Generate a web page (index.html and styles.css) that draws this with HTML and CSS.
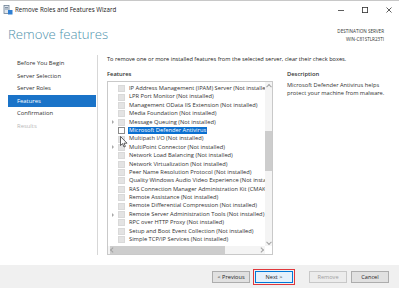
FILE: index.html
```html
<!DOCTYPE html>
<html>
<head>
<meta charset="utf-8">
<link rel="stylesheet" href="styles.css">
</head>
<body>
<div class="window">
  <div class="titlebar">
    <svg class="appicon" width="10" height="10" viewBox="0 0 10 10">
      <rect x="1" y="0.5" width="5" height="8" fill="#dfe6ee" stroke="#6d7f93" stroke-width="0.8"/>
      <rect x="2" y="2" width="3" height="0.8" fill="#6d7f93"/>
      <rect x="2" y="3.6" width="3" height="0.8" fill="#6d7f93"/>
      <rect x="5" y="5" width="4.5" height="4.5" fill="#2f7fd3"/>
    </svg>
    <span class="title">Remove Roles and Features Wizard</span>
    <div class="controls">
      <svg width="10" height="10" viewBox="0 0 10 10"><line x1="2" y1="5.5" x2="8" y2="5.5" stroke="#333" stroke-width="0.8"/></svg>
      <svg width="10" height="10" viewBox="0 0 10 10"><rect x="2.4" y="2.4" width="5.2" height="5.2" fill="none" stroke="#333" stroke-width="0.8"/></svg>
      <svg width="10" height="10" viewBox="0 0 10 10"><path d="M2.5 2.5L7.5 7.5M7.5 2.5L2.5 7.5" stroke="#333" stroke-width="0.8"/></svg>
    </div>
  </div>
  <div class="header">
    <h1 class="heading">Remove features</h1>
    <div class="dest">
      <div>DESTINATION SERVER</div>
      <div>WIN-C81STLR23TI</div>
    </div>
  </div>
  <div class="main">
    <nav class="nav">
      <div class="navitem">Before You Begin</div>
      <div class="navitem">Server Selection</div>
      <div class="navitem">Server Roles</div>
      <div class="navitem active">Features</div>
      <div class="navitem">Confirmation</div>
      <div class="navitem disabled">Results</div>
    </nav>
    <section class="content">
      <p class="intro">To remove one or more installed features from the selected server, clear their check boxes.</p>
      <div class="cols">
        <div class="featcol">
          <div class="label">Features</div>
          <div class="listbox">
            <div class="listarea">
              <div class="rows">
                <div class="row"><span class="exp"></span><span class="cb"></span><span class="txt">IP Address Management (IPAM) Server (Not installed)</span></div>
                <div class="row"><span class="exp"></span><span class="cb"></span><span class="txt">LPR Port Monitor (Not installed)</span></div>
                <div class="row"><span class="exp"></span><span class="cb"></span><span class="txt">Management OData IIS Extension (Not installed)</span></div>
                <div class="row"><span class="exp"></span><span class="cb"></span><span class="txt">Media Foundation (Not installed)</span></div>
                <div class="row"><span class="exp tri"></span><span class="cb"></span><span class="txt">Message Queuing (Not installed)</span></div>
                <div class="row"><span class="exp"></span><span class="cb on"></span><span class="txt sel">Microsoft Defender Antivirus</span></div>
                <div class="row"><span class="exp"></span><span class="cb"></span><span class="txt">Multipath I/O (Not installed)</span></div>
                <div class="row"><span class="exp tri"></span><span class="cb"></span><span class="txt">MultiPoint Connector (Not installed)</span></div>
                <div class="row"><span class="exp"></span><span class="cb"></span><span class="txt">Network Load Balancing (Not installed)</span></div>
                <div class="row"><span class="exp"></span><span class="cb"></span><span class="txt">Network Virtualization (Not installed)</span></div>
                <div class="row"><span class="exp"></span><span class="cb"></span><span class="txt">Peer Name Resolution Protocol (Not installed)</span></div>
                <div class="row"><span class="exp"></span><span class="cb"></span><span class="txt">Quality Windows Audio Video Experience (Not installed)</span></div>
                <div class="row"><span class="exp"></span><span class="cb"></span><span class="txt">RAS Connection Manager Administration Kit (CMAK) (Not installed)</span></div>
                <div class="row"><span class="exp"></span><span class="cb"></span><span class="txt">Remote Assistance (Not installed)</span></div>
                <div class="row"><span class="exp"></span><span class="cb"></span><span class="txt">Remote Differential Compression (Not installed)</span></div>
                <div class="row"><span class="exp tri"></span><span class="cb"></span><span class="txt">Remote Server Administration Tools (Not installed)</span></div>
                <div class="row"><span class="exp"></span><span class="cb"></span><span class="txt">RPC over HTTP Proxy (Not installed)</span></div>
                <div class="row"><span class="exp"></span><span class="cb"></span><span class="txt">Setup and Boot Event Collection (Not installed)</span></div>
                <div class="row"><span class="exp"></span><span class="cb"></span><span class="txt">Simple TCP/IP Services (Not installed)</span></div>
              </div>
              <div class="vscroll">
                <span class="arrow up"></span>
                <div class="vtrack"><div class="vthumb"></div></div>
                <span class="arrow down"></span>
              </div>
            </div>
            <div class="hscroll">
              <span class="arrow left"></span>
              <div class="htrack"><div class="hthumb"></div></div>
              <span class="arrow right"></span>
              <span class="corner"></span>
            </div>
          </div>
        </div>
        <div class="desccol">
          <div class="label">Description</div>
          <p class="desc">Microsoft Defender Antivirus helps protect your machine from malware.</p>
        </div>
      </div>
    </section>
  </div>
  <div class="footer">
    <button class="btn">&lt; Previous</button>
    <span class="focusring"><button class="btn primary">Next &gt;</button></span>
    <button class="btn off">Remove</button>
    <button class="btn">Cancel</button>
  </div>
  <svg class="cursor" width="8" height="12" viewBox="0 0 8 12">
    <path d="M0.5 0.5 L0.5 9.5 L2.6 7.6 L4 11 L5.4 10.4 L4 7.2 L7 7.2 Z" fill="#fff" stroke="#222" stroke-width="0.7" stroke-linejoin="round"/>
  </svg>
</div>
</body>
</html>
```
FILE: styles.css
```css
* { box-sizing: border-box; }
html, body { margin: 0; padding: 0; }
body {
  width: 399px;
  height: 288px;
  overflow: hidden;
  background: #fff;
  font-family: "Open Sans", "Noto Sans", sans-serif;
  color: #1e1e1e;
}
.window {
  position: relative;
  width: 399px;
  height: 288px;
  display: flex;
  flex-direction: column;
  border-top: 1px solid #c8c8c8;
}
.titlebar {
  height: 17px;
  display: flex;
  align-items: center;
  padding-left: 3px;
}
.appicon { flex: none; }
.title {
  margin-left: 2px;
  font-size: 6.2px;
  color: #222;
}
.controls {
  margin-left: auto;
  display: flex;
  gap: 14px;
  padding-right: 5px;
}
.header {
  height: 37px;
  display: flex;
  justify-content: space-between;
  padding: 8px 15px 0 8px;
}
.heading {
  margin: 0;
  font-weight: 300;
  font-size: 13.2px;
  line-height: 16px;
  color: #4f93ad;
}
.dest {
  text-align: right;
  font-size: 4.6px;
  line-height: 7.5px;
  color: #333;
  padding-top: 2px;
}
.main {
  flex: 1;
  display: flex;
  padding-bottom: 10px;
}
.nav {
  width: 98px;
  flex: none;
  border-right: 1px solid #d7d7d7;
  padding: 2px 1px 0 8px;
  display: flex;
  flex-direction: column;
}
.navitem {
  height: 12.6px;
  line-height: 12.6px;
  padding-left: 9px;
  font-size: 5.9px;
  color: #333;
}
.navitem.active {
  background: #1a73c8;
  color: #fff;
}
.navitem.disabled { color: #b8b8b8; }
.content {
  flex: 1;
  padding-left: 9px;
  display: flex;
  flex-direction: column;
}
.intro {
  margin: 0;
  font-size: 5.65px;
  line-height: 8px;
  height: 15px;
  color: #222;
}
.cols {
  flex: 1;
  display: flex;
  gap: 14px;
}
.featcol {
  width: 166px;
  flex: none;
  display: flex;
  flex-direction: column;
}
.label {
  font-size: 5.8px;
  line-height: 8px;
  height: 11px;
  font-weight: 600;
  color: #333;
}
.listbox {
  flex: 1;
  border: 1px solid #c9c9c9;
  display: flex;
  flex-direction: column;
  overflow: hidden;
}
.listarea {
  flex: 1;
  display: flex;
  min-height: 0;
}
.rows {
  flex: 1;
  overflow: hidden;
  padding-top: 2.5px;
}
.row {
  height: 8.4px;
  display: flex;
  align-items: center;
  white-space: nowrap;
}
.exp {
  width: 10px;
  flex: none;
  display: flex;
  justify-content: center;
}
.exp.tri::before {
  content: "";
  width: 0;
  height: 0;
  border-left: 2.4px solid #a8a8a8;
  border-top: 2.2px solid transparent;
  border-bottom: 2.2px solid transparent;
}
.cb {
  width: 7px;
  height: 7px;
  flex: none;
  background: #e3e3e3;
  border: 1px solid #d9d9d9;
  margin-right: 3px;
}
.cb.on {
  background: #fff;
  border: 1px solid #8a8a8a;
}
.txt {
  font-size: 5.75px;
  line-height: 7.4px;
  color: #333;
  padding: 0 1px;
}
.txt.sel {
  background: #0a6fd0;
  color: #fff;
}
.vscroll {
  width: 7px;
  flex: none;
  display: flex;
  flex-direction: column;
  align-items: center;
  background: #f4f4f4;
}
.vtrack {
  flex: 1;
  width: 100%;
  padding-top: 42px;
}
.vthumb {
  height: 40px;
  width: 100%;
  background: #cdcdcd;
}
.arrow {
  flex: none;
  width: 7px;
  height: 7px;
  display: flex;
  align-items: center;
  justify-content: center;
}
.arrow::before {
  content: "";
  width: 3px;
  height: 3px;
  border-left: 0.7px solid #a3a3a3;
  border-top: 0.7px solid #a3a3a3;
}
.arrow.up::before { transform: translateY(0.8px) rotate(45deg); }
.arrow.down::before { transform: translateY(-0.8px) rotate(225deg); }
.arrow.left::before { transform: translateX(0.8px) rotate(-45deg); }
.arrow.right::before { transform: translateX(-0.8px) rotate(135deg); }
.hscroll {
  height: 8px;
  flex: none;
  display: flex;
  align-items: center;
  background: #f4f4f4;
}
.htrack {
  flex: 1;
  height: 100%;
  display: flex;
  align-items: center;
}
.hthumb {
  width: 115px;
  height: 100%;
  background: #cdcdcd;
  margin-left: -5px;
}
.corner {
  width: 7px;
  height: 100%;
  background: #fff;
}
.desccol {
  flex: 1;
  display: flex;
  flex-direction: column;
}
.desc {
  margin: 0;
  font-size: 5.7px;
  line-height: 8px;
  color: #333;
  width: 100px;
}
.footer {
  height: 23px;
  flex: none;
  background: #f0f0f0;
  display: flex;
  align-items: center;
  padding: 0 10px 0 212px;
}
.btn {
  width: 38px;
  height: 12px;
  padding: 0;
  font-family: inherit;
  font-size: 5.6px;
  color: #222;
  background: #e1e1e1;
  border: 1px solid #adadad;
  border-radius: 0;
}
.focusring {
  margin-left: 3px;
  padding: 1px;
  border: 1px solid #e0373b;
  display: flex;
}
.btn.primary {
  background: #e5f1fb;
  border: 1px solid #0078d7;
}
.btn.off {
  margin-left: 14px;
  color: #a0a0a0;
  background: #ececec;
  border-color: #c8c8c8;
}
.btn.off + .btn { margin-left: 4px; }
.cursor {
  position: absolute;
  left: 120px;
  top: 135px;
}
```
